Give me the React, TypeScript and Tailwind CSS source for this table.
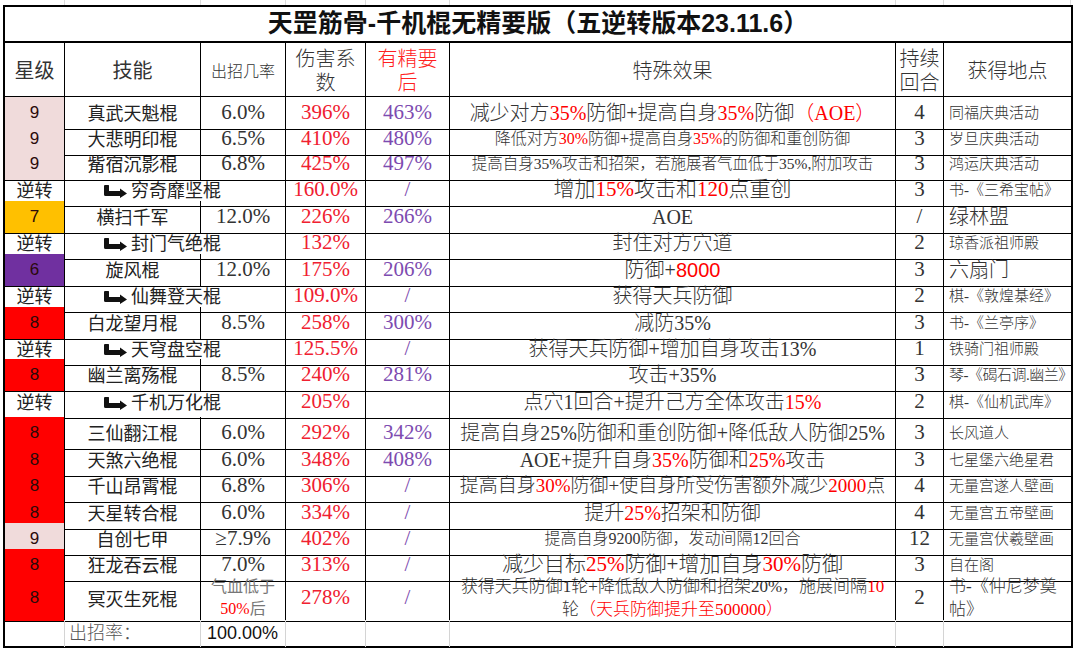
import type { ReactNode } from "react"

const cols = "grid grid-cols-[60px_136px_85px_80px_84px_446px_48px_127px]"
const cell = "border-r border-b border-black flex items-center justify-center text-center"
const cjk = "font-['Liberation_Serif','Noto_Sans_CJK_SC',serif]"
const sans = "font-['Liberation_Sans','Noto_Sans_CJK_SC',sans-serif]"

const r = (s: string) => <span className="text-[#ff0000]">{s}</span>

type Row = {
  star: string
  bg: string
  skill: string
  rate?: ReactNode
  dmg: string
  jy?: string
  fx: ReactNode
  fxCls: string
  dur: string
  place: ReactNode
  placeCls: string
  h: string
  rev?: boolean
}

const pink = "bg-[#f0dbdb]"
const red = "bg-[#ff0000]"

const rows: Row[] = [
  { star: "9", bg: pink, skill: "真武天魁棍", rate: "6.0%", dmg: "396%", jy: "463%", fx: <>减少对方{r("35%")}防御+提高自身{r("35%")}防御{r("（AOE）")}</>, fxCls: "text-[20px]", dur: "4", place: "同福庆典活动", placeCls: "text-[15px]", h: "h-[26px]" },
  { star: "9", bg: pink, skill: "大悲明印棍", rate: "6.5%", dmg: "410%", jy: "480%", fx: <>降低对方{r("30%")}防御+提高自身{r("35%")}的防御和重创防御</>, fxCls: "text-[16px]", dur: "3", place: "岁旦庆典活动", placeCls: "text-[15px]", h: "h-[25px]" },
  { star: "9", bg: pink, skill: "觜宿沉影棍", rate: "6.8%", dmg: "425%", jy: "497%", fx: "提高自身35%攻击和招架，若施展者气血低于35%,附加攻击", fxCls: "text-[15.5px]", dur: "3", place: "鸿运庆典活动", placeCls: "text-[15px]", h: "h-[26px]" },
  { star: "逆转", bg: "", skill: "穷奇靡坚棍", dmg: "160.0%", jy: "/", fx: <>增加{r("15%")}攻击和{r("120")}点重创</>, fxCls: "text-[21px]", dur: "3", place: "书-《三希宝帖》", placeCls: "text-[15px]", h: "h-[27px]", rev: true },
  { star: "7", bg: "bg-[#ffc000]", skill: "横扫千军", rate: "12.0%", dmg: "226%", jy: "266%", fx: "AOE", fxCls: "text-[20px]", dur: "/", place: "绿林盟", placeCls: "text-[20px]", h: "h-[26px]" },
  { star: "逆转", bg: "", skill: "封门气绝棍", dmg: "132%", fx: "封住对方穴道", fxCls: "text-[20px]", dur: "2", place: "琼香派祖师殿", placeCls: "text-[15px]", h: "h-[27px]", rev: true },
  { star: "6", bg: "bg-[#7030a0]", skill: "旋风棍", rate: "12.0%", dmg: "175%", jy: "206%", fx: <>防御+<span className="font-['Liberation_Sans'] text-[#ff0000]">8000</span></>, fxCls: "text-[20px]", dur: "3", place: "六扇门", placeCls: "text-[20px]", h: "h-[26px]" },
  { star: "逆转", bg: "", skill: "仙舞登天棍", dmg: "109.0%", jy: "/", fx: "获得天兵防御", fxCls: "text-[20px]", dur: "2", place: "棋-《敦煌棊经》", placeCls: "text-[15px]", h: "h-[27px]", rev: true },
  { star: "8", bg: red, skill: "白龙望月棍", rate: "8.5%", dmg: "258%", jy: "300%", fx: "减防35%", fxCls: "text-[20px]", dur: "3", place: "书-《兰亭序》", placeCls: "text-[15px]", h: "h-[26px]" },
  { star: "逆转", bg: "", skill: "天穹盘空棍", dmg: "125.5%", jy: "/", fx: "获得天兵防御+增加自身攻击13%", fxCls: "text-[20px]", dur: "1", place: "铁骑门祖师殿", placeCls: "text-[15px]", h: "h-[26px]", rev: true },
  { star: "8", bg: red, skill: "幽兰离殇棍", rate: "8.5%", dmg: "240%", jy: "281%", fx: "攻击+35%", fxCls: "text-[20px]", dur: "3", place: "琴-《碣石调.幽兰》", placeCls: "text-[15px] tracking-[-0.5px]", h: "h-[27px]" },
  { star: "逆转", bg: "", skill: "千机万化棍", dmg: "205%", fx: <>点穴1回合+提升己方全体攻击{r("15%")}</>, fxCls: "text-[20px]", dur: "2", place: "棋-《仙机武库》", placeCls: "text-[15px]", h: "h-[31px]", rev: true },
  { star: "8", bg: red, skill: "三仙翻江棍", rate: "6.0%", dmg: "292%", jy: "342%", fx: "提高自身25%防御和重创防御+降低敌人防御25%", fxCls: "text-[20px]", dur: "3", place: "长风道人", placeCls: "text-[15px]", h: "h-[27px]" },
  { star: "8", bg: red, skill: "天煞六绝棍", rate: "6.0%", dmg: "348%", jy: "408%", fx: <>AOE+提升自身{r("35%")}防御和{r("25%")}攻击</>, fxCls: "text-[20px]", dur: "3", place: "七星堡六绝星君", placeCls: "text-[15px]", h: "h-[26px]" },
  { star: "8", bg: red, skill: "千山昂霄棍", rate: "6.8%", dmg: "306%", jy: "/", fx: <>提高自身{r("30%")}防御+使自身所受伤害额外减少{r("2000")}点</>, fxCls: "text-[19px]", dur: "4", place: "无量宫遂人壁画", placeCls: "text-[15px]", h: "h-[27px]" },
  { star: "8", bg: red, skill: "天星转合棍", rate: "6.0%", dmg: "334%", jy: "/", fx: <>提升{r("25%")}招架和防御</>, fxCls: "text-[20px]", dur: "4", place: "无量宫五帝壁画", placeCls: "text-[15px]", h: "h-[26px]" },
  { star: "9", bg: pink, skill: "自创七甲", rate: "≥7.9%", dmg: "402%", jy: "/", fx: "提高自身9200防御，发动间隔12回合", fxCls: "text-[16px]", dur: "12", place: "无量宫伏羲壁画", placeCls: "text-[15px]", h: "h-[26px]" },
  { star: "8", bg: red, skill: "狂龙吞云棍", rate: "7.0%", dmg: "313%", jy: "/", fx: <>减少目标{r("25%")}防御+增加自身{r("30%")}防御</>, fxCls: "text-[21px]", dur: "3", place: "自在阁", placeCls: "text-[15px]", h: "h-[26px]" },
  {
    star: "8", bg: red, skill: "冥灭生死棍",
    rate: <div className="text-[16px] leading-[22px] text-[#777]">气血低于<br />{r("50%")}后</div>,
    dmg: "278%", jy: "/",
    fx: <>获得天兵防御1轮+降低敌人防御和招架20%，施展间隔{r("10")}<br />轮{r("（天兵防御提升至500000）")}</>,
    fxCls: "text-[17px] leading-[23px]", dur: "2",
    place: <>书-《仲尼梦奠<br />帖》</>, placeCls: "text-[17px] leading-[23px]", h: "h-[45px]",
  },
]

function Arrow() {
  return (
    <svg width="24" height="13" viewBox="0 0 24 13" className="mr-[3px] mt-[3px] shrink-0">
      <path d="M1 0 H4.5 Q5 0 5 1 V6 H16 V3.5 L23 8.5 L16 13 V11 H1.5 Q0 11 0 9.5 V1 Q0 0 1 0 Z" fill="#111" />
    </svg>
  )
}

function DataRow({ row }: { row: Row }) {
  return (
    <div className={`${cols} ${row.h}`}>
      <div className={`${cell} ${row.bg} ${row.star === "逆转" ? "text-[18px] font-['Noto_Sans_CJK_SC',sans-serif] text-[#222]" : "text-[17px] font-['Liberation_Sans',sans-serif] text-[#2a0a0a]"}`}>
        <span>{row.star}</span>
      </div>
      {row.rev ? (
        <div className={`${cell} col-span-2 !justify-start pl-[39px] text-[18px] font-['Noto_Sans_CJK_SC',sans-serif] text-[#222]`}>
          <Arrow />
          <span>{row.skill}</span>
        </div>
      ) : (
        <>
          <div className={`${cell} text-[18px] font-['Noto_Sans_CJK_SC',sans-serif] text-[#222]`}>
            <span>{row.skill}</span>
          </div>
          <div className={`${cell} text-[21px] ${cjk} text-[#333]`}>
            <div>{row.rate}</div>
          </div>
        </>
      )}
      <div className={`${cell} text-[21px] ${cjk} text-[#f02030]`}>
        <span>{row.dmg}</span>
      </div>
      <div className={`${cell} text-[21px] ${cjk} text-[#7d4bb0]`}>
        <span>{row.jy}</span>
      </div>
      <div className={`${cell} ${row.fxCls} ${cjk} font-light text-[#333] whitespace-nowrap`}>
        <span>{row.fx}</span>
      </div>
      <div className={`${cell} text-[21px] ${cjk} text-[#333]`}>
        <span>{row.dur}</span>
      </div>
      <div className={`border-b border-black flex items-center pl-[5px] ${row.placeCls} ${cjk} font-light text-[#333] whitespace-nowrap`}>
        <span>{row.place}</span>
      </div>
    </div>
  )
}

function GridStrip({ h }: { h: string }) {
  return (
    <div className={`${cols} ${h} ml-[5px]`}>
      {Array.from({ length: 8 }).map((_, i) => (
        <div key={i} className="border-r border-[#dcdcdc]" />
      ))}
    </div>
  )
}

export default function App() {
  return (
    <div className="w-[1080px] h-[652px] bg-white overflow-hidden">
      <GridStrip h="h-[5px]" />
      <div className="ml-[3px] w-[1070px] border-2 border-black">
        <div className={`h-[36px] border-b-2 border-black flex items-center justify-center text-[25px] font-bold text-[#111] ${sans}`}>
          天罡筋骨-千机棍无精要版（五逆转版本23.11.6）
        </div>
        <div className={`${cols} h-[54px] text-[20px] text-[#333] font-['Noto_Sans_CJK_SC',sans-serif] leading-[24px]`}>
          <div className={cell}>星级</div>
          <div className={cell}>技能</div>
          <div className={`${cell} text-[16px] font-light`}>出招几率</div>
          <div className={`${cell} font-light`}><span>伤害系<br />数</span></div>
          <div className={`${cell} font-light text-[#ff2020]`}><span>有精要<br />后</span></div>
          <div className={`${cell} font-light`}>特殊效果</div>
          <div className={`${cell} font-light`}><span>持续<br />回合</span></div>
          <div className="border-b border-black flex items-center justify-center font-light">获得地点</div>
        </div>
        {rows.map((row) => (
          <DataRow key={row.skill} row={row} />
        ))}
        <div className={`${cols} h-[26px]`}>
          <div className="border-r border-[#d4d4d4]" />
          <div className={`border-r border-[#d4d4d4] flex items-center pl-[4px] text-[18px] font-light text-[#555] ${cjk}`}>出招率：</div>
          <div className="border-r border-[#d4d4d4] flex items-center pl-[6px] text-[18px] text-[#111] font-['Liberation_Sans',sans-serif]">100.00%</div>
          <div className="border-r border-[#d4d4d4]" />
          <div className="border-r border-[#d4d4d4]" />
          <div className="border-r border-[#d4d4d4]" />
          <div className="border-r border-[#d4d4d4]" />
          <div />
        </div>
      </div>
    </div>
  )
}
